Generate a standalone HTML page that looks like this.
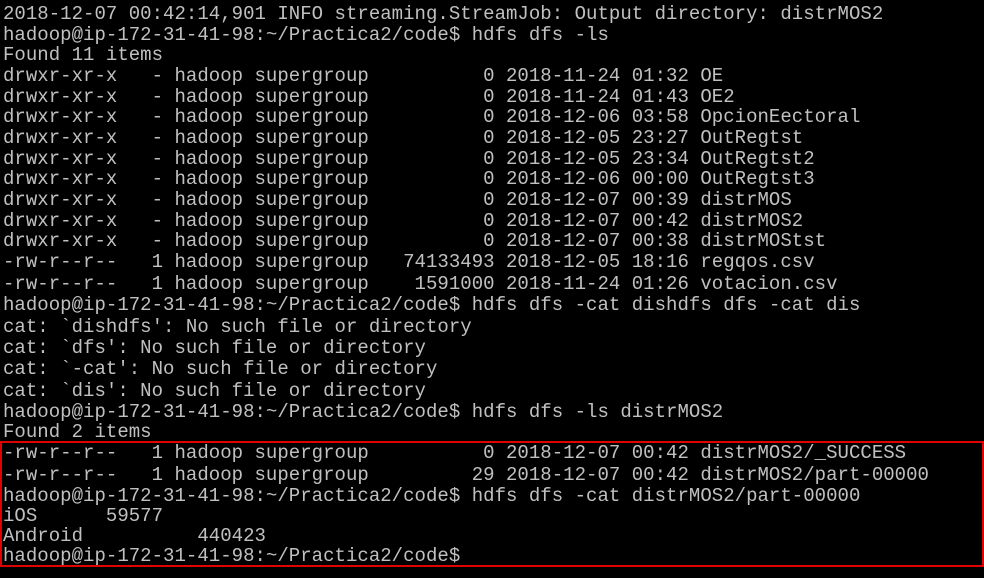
<!DOCTYPE html>
<html><head><style>
html,body{margin:0;padding:0;background:#000;width:984px;height:578px;overflow:hidden;position:relative}
div.l{position:absolute;left:3px;margin:2px 0 0 0;white-space:pre;font-family:"Liberation Mono",monospace;font-size:19px;line-height:21px;color:#c0c0c0;letter-spacing:0.03px}
.box{position:absolute;left:0;top:441px;width:980px;height:122px;border:2px solid #e00000}
</style></head><body>
<div class="l" style="top:2px">2018-12-07 00:42:14,901 INFO streaming.StreamJob: Output directory: distrMOS2</div>
<div class="l" style="top:22.7px">hadoop@ip-172-31-41-98:~/Practica2/code$ hdfs dfs -ls</div>
<div class="l" style="top:43.3px">Found 11 items</div>
<div class="l" style="top:64px">drwxr-xr-x   - hadoop supergroup          0 2018-11-24 01:32 OE</div>
<div class="l" style="top:84.7px">drwxr-xr-x   - hadoop supergroup          0 2018-11-24 01:43 OE2</div>
<div class="l" style="top:105.3px">drwxr-xr-x   - hadoop supergroup          0 2018-12-06 03:58 OpcionEectoral</div>
<div class="l" style="top:126px">drwxr-xr-x   - hadoop supergroup          0 2018-12-05 23:27 OutRegtst</div>
<div class="l" style="top:146.7px">drwxr-xr-x   - hadoop supergroup          0 2018-12-05 23:34 OutRegtst2</div>
<div class="l" style="top:167.3px">drwxr-xr-x   - hadoop supergroup          0 2018-12-06 00:00 OutRegtst3</div>
<div class="l" style="top:188px">drwxr-xr-x   - hadoop supergroup          0 2018-12-07 00:39 distrMOS</div>
<div class="l" style="top:208.7px">drwxr-xr-x   - hadoop supergroup          0 2018-12-07 00:42 distrMOS2</div>
<div class="l" style="top:229px">drwxr-xr-x   - hadoop supergroup          0 2018-12-07 00:38 distrMOStst</div>
<div class="l" style="top:250.4px">-rw-r--r--   1 hadoop supergroup   74133493 2018-12-05 18:16 regqos.csv</div>
<div class="l" style="top:271.8px">-rw-r--r--   1 hadoop supergroup    1591000 2018-11-24 01:26 votacion.csv</div>
<div class="l" style="top:293.2px">hadoop@ip-172-31-41-98:~/Practica2/code$ hdfs dfs -cat dishdfs dfs -cat dis</div>
<div class="l" style="top:314.6px">cat: `dishdfs': No such file or directory</div>
<div class="l" style="top:336px">cat: `dfs': No such file or directory</div>
<div class="l" style="top:357.4px">cat: `-cat': No such file or directory</div>
<div class="l" style="top:378.9px">cat: `dis': No such file or directory</div>
<div class="l" style="top:400.3px">hadoop@ip-172-31-41-98:~/Practica2/code$ hdfs dfs -ls distrMOS2</div>
<div class="l" style="top:420.3px">Found 2 items</div>
<div class="l" style="top:441.4px">-rw-r--r--   1 hadoop supergroup          0 2018-12-07 00:42 distrMOS2/_SUCCESS</div>
<div class="l" style="top:462.5px">-rw-r--r--   1 hadoop supergroup         29 2018-12-07 00:42 distrMOS2/part-00000</div>
<div class="l" style="top:483.7px">hadoop@ip-172-31-41-98:~/Practica2/code$ hdfs dfs -cat distrMOS2/part-00000</div>
<div class="l" style="top:503.7px">iOS      59577</div>
<div class="l" style="top:523.7px">Android          440423</div>
<div class="l" style="top:543.7px">hadoop@ip-172-31-41-98:~/Practica2/code$</div>
<div class="box"></div>
</body></html>
